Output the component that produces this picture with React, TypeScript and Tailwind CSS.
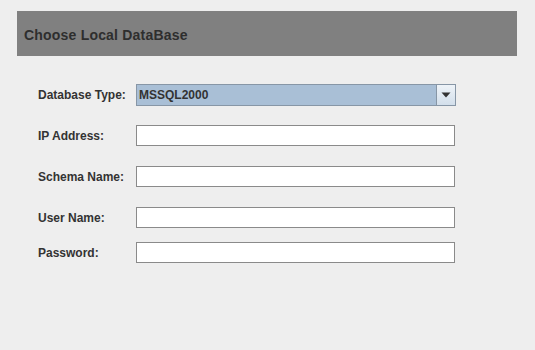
import React from "react";

const font = { fontFamily: '"Liberation Sans", Arial, sans-serif' };

function Field({ label, className }: { label: string; className: string }) {
  return (
    <div className={`flex items-center ${className}`}>
      <div className="w-[98px] text-[12px] font-bold text-[#333333] leading-none">{label}</div>
      <div className="w-[319px] h-[21px] bg-white border border-[#8a8a8a]" />
    </div>
  );
}

export default function App() {
  return (
    <div className="w-[535px] h-[350px] bg-[#eeeeee] pt-[11px] pl-[17px]" style={font}>
      <div className="w-[500px] h-[45px] bg-[#808080] flex items-center pl-[7px] pt-[2px]">
        <span className="text-[14px] font-bold text-[#2e2e2e] leading-none tracking-[0.2px]">Choose Local DataBase</span>
      </div>
      <div className="pl-[21px] flex flex-col">
        <div className="flex items-center mt-[28px]">
          <div className="w-[98px] text-[12px] font-bold text-[#333333] leading-none">Database Type:</div>
          <div className="w-[320px] h-[22px] flex border border-[#8796a6] bg-[#a9bfd6]">
            <div className="flex-1 flex items-center pl-[2px] text-[12px] font-bold text-[#333333] leading-none">MSSQL2000</div>
            <div className="w-[19px] h-full border-l border-[#8796a6] bg-gradient-to-b from-[#eef3f8] to-[#d3dfeb] flex items-center justify-center">
              <svg width="10" height="6" viewBox="0 0 10 6">
                <path d="M0.5 0.5 H9.5 L5 5.5 Z" fill="#333333" />
              </svg>
            </div>
          </div>
        </div>
        <Field label="IP Address:" className="mt-[19px]" />
        <Field label="Schema Name:" className="mt-[20px]" />
        <Field label="User Name:" className="mt-[20px]" />
        <Field label="Password:" className="mt-[14px]" />
      </div>
    </div>
  );
}
